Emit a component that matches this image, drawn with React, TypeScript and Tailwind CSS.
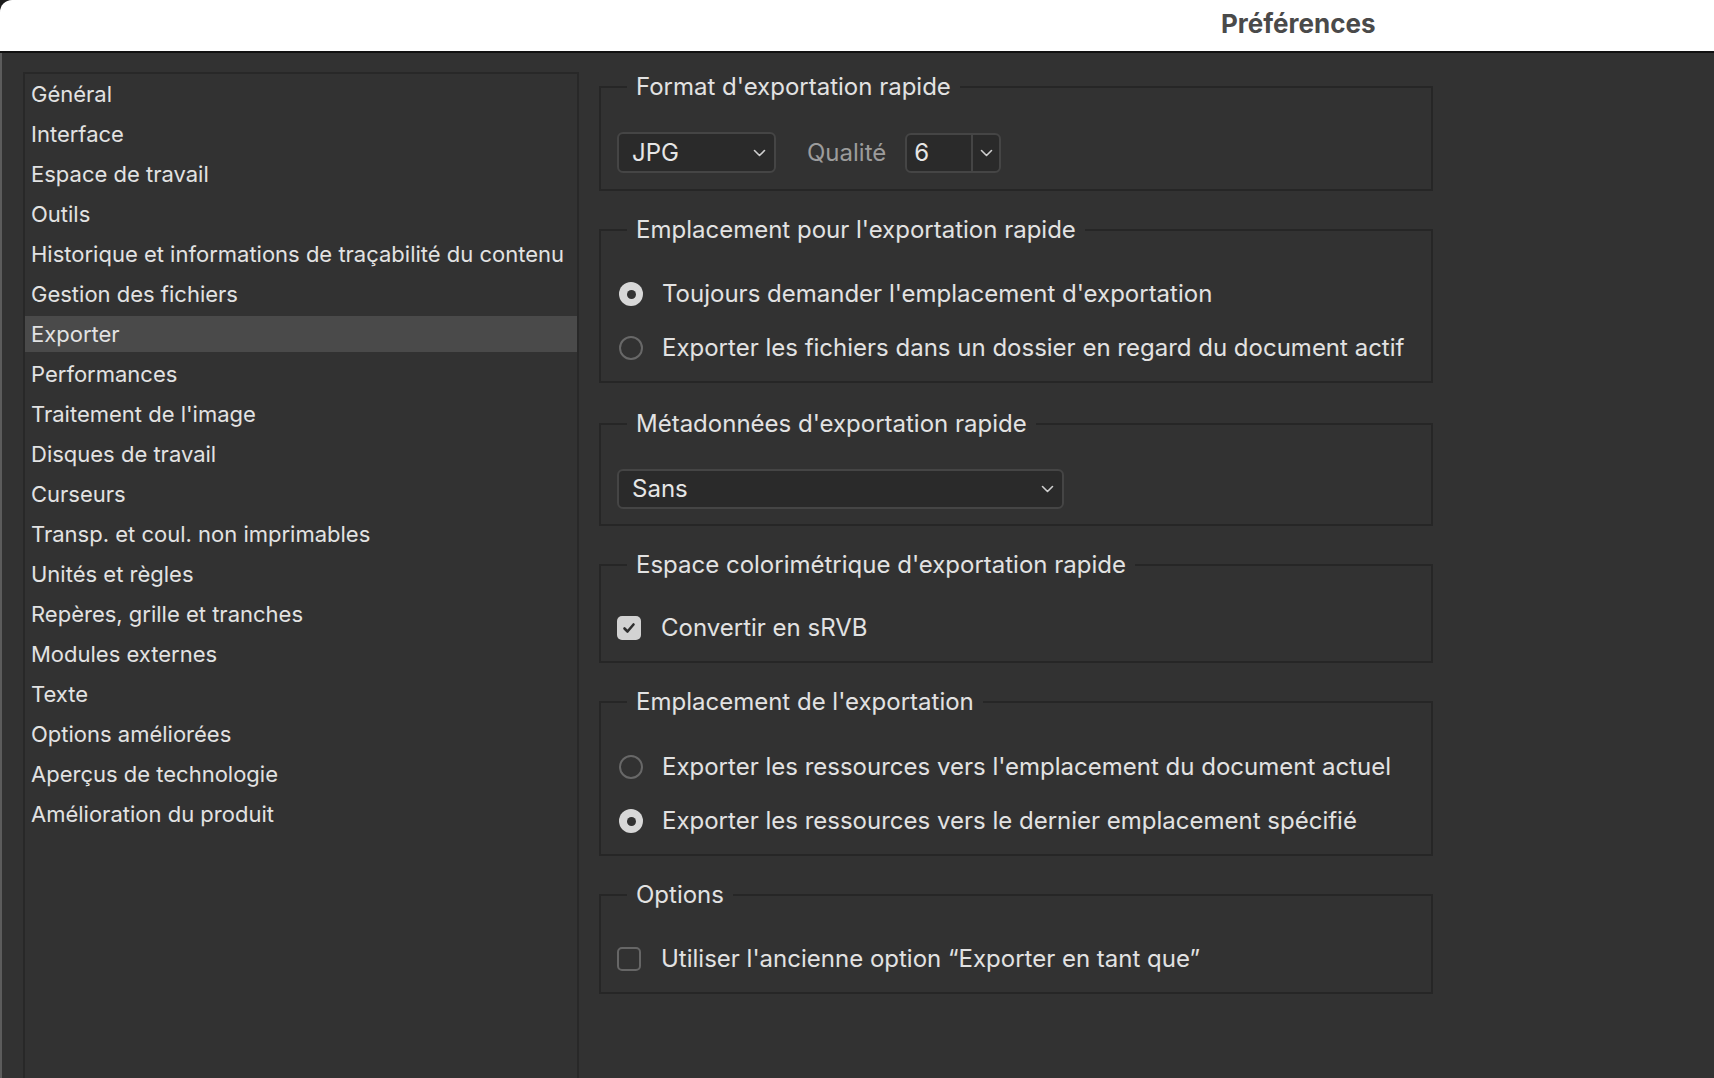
import React from "react"

const FONT = { fontFamily: "Inter, 'Noto Sans', sans-serif" }

const sections = [
  "Général",
  "Interface",
  "Espace de travail",
  "Outils",
  "Historique et informations de traçabilité du contenu",
  "Gestion des fichiers",
  "Exporter",
  "Performances",
  "Traitement de l'image",
  "Disques de travail",
  "Curseurs",
  "Transp. et coul. non imprimables",
  "Unités et règles",
  "Repères, grille et tranches",
  "Modules externes",
  "Texte",
  "Options améliorées",
  "Aperçus de technologie",
  "Amélioration du produit",
]

function Chevron() {
  return (
    <svg width="13" height="8" viewBox="0 0 13 8" fill="none">
      <polyline points="1.5,1.5 6.5,6.5 11.5,1.5" stroke="#cfcfcf" strokeWidth="1.6" strokeLinecap="round" strokeLinejoin="round" />
    </svg>
  )
}

function Radio({ checked, label }: { checked?: boolean; label: string }) {
  return (
    <div className="flex h-[36px] items-center">
      <span className="ml-[2px] w-[24px] h-[24px] shrink-0">
        {checked ? (
          <span className="flex h-full w-full items-center justify-center rounded-full bg-[#d8d8d8]">
            <span className="h-[9px] w-[9px] rounded-full bg-[#323232]" />
          </span>
        ) : (
          <span className="block h-full w-full rounded-full border-2 border-[#686868]" />
        )}
      </span>
      <span className="ml-[19px] text-[24px] text-[#e2e2e2]">{label}</span>
    </div>
  )
}

function Checkbox({ checked, label }: { checked?: boolean; label: string }) {
  return (
    <div className="flex h-[36px] items-center">
      {checked ? (
        <span className="flex h-[24px] w-[24px] items-center justify-center rounded-[5px] bg-[#d2d2d2]">
          <svg width="16" height="16" viewBox="0 0 16 16" fill="none">
            <polyline points="3.5,8.5 6.5,11.5 12.5,4.5" stroke="#2e2e2e" strokeWidth="2.6" strokeLinecap="round" strokeLinejoin="round" />
          </svg>
        </span>
      ) : (
        <span className="block h-[24px] w-[24px] rounded-[5px] border-2 border-[#666666]" />
      )}
      <span className="ml-[20px] text-[24px] text-[#e2e2e2]">{label}</span>
    </div>
  )
}

function Group({ title, top, children }: { title: string; top: string; children: React.ReactNode }) {
  return (
    <fieldset className={`w-[834px] border-2 border-[#262626] pl-[16px] pt-[30px] pb-[15px] ${top}`}>
      <legend className="ml-[10px] px-[9px] h-[30px] leading-[30px] text-[24px] text-[#e2e2e2]">{title}</legend>
      {children}
    </fieldset>
  )
}

export default function App() {
  return (
    <div className="w-[1714px] h-[1078px] overflow-hidden bg-[#1c1c1c] flex flex-col" style={FONT}>
      {/* barre de titre */}
      <div className="h-[53px] shrink-0 bg-white rounded-tl-[12px] border-b-2 border-[#111] flex items-center pl-[1221px] pb-[5px]">
        <span className="text-[26px] font-bold text-[#4a4a4a]">Préférences</span>
      </div>

      <div className="flex-1 flex bg-[#323232] border-l-2 border-[#5c5c5c] min-h-0">
        {/* liste des sections */}
        <aside className="ml-[21px] mt-[19px] w-[556px] shrink-0 border-2 border-b-0 border-[#282828] pt-[2px]">
          {sections.map((s, i) => (
            <div
              key={s}
              className={`h-[36px] px-[6px] flex items-center text-[22px] text-[#e2e2e2] whitespace-nowrap ${i > 0 ? "mt-[4px]" : ""} ${s === "Exporter" ? "bg-[#4a4a4a]" : ""}`}
            >
              {s}
            </div>
          ))}
        </aside>

        {/* réglages */}
        <main className="ml-[20px] flex flex-col">
          <Group title="Format d'exportation rapide" top="mt-[19px] pb-[16px]">
            <div className="flex items-center h-[41px]">
              <div className="w-[159px] h-[41px] rounded-[6px] border-2 border-[#454545] bg-[#2a2a2a] flex items-center justify-between pl-[13px] pr-[8px]">
                <span className="text-[24px] text-[#e6e6e6]">JPG</span>
                <Chevron />
              </div>
              <span className="ml-[31px] text-[24px] text-[#9c9c9c]">Qualité</span>
              <div className="ml-[19px] w-[96px] h-[40px] rounded-[6px] border-2 border-[#454545] bg-[#2a2a2a] flex">
                <div className="w-[64px] flex items-center pl-[7px] text-[24px] text-[#e6e6e6]">6</div>
                <div className="flex-1 border-l-2 border-[#454545] flex items-center justify-center">
                  <Chevron />
                </div>
              </div>
            </div>
          </Group>

          <Group title="Emplacement pour l'exportation rapide" top="mt-[24px]">
            <div className="flex flex-col gap-[18px] pt-[1px]">
              <Radio checked label="Toujours demander l'emplacement d'exportation" />
              <Radio label="Exporter les fichiers dans un dossier en regard du document actif" />
            </div>
          </Group>

          <Group title="Métadonnées d'exportation rapide" top="mt-[26px]">
            <div className="w-[447px] h-[40px] rounded-[6px] border-2 border-[#454545] bg-[#2a2a2a] flex items-center justify-between pl-[13px] pr-[8px]">
              <span className="text-[24px] text-[#e6e6e6]">Sans</span>
              <Chevron />
            </div>
          </Group>

          <Group title="Espace colorimétrique d'exportation rapide" top="mt-[24px]">
            <Checkbox checked label="Convertir en sRVB" />
          </Group>

          <Group title="Emplacement de l'exportation" top="mt-[24px]">
            <div className="flex flex-col gap-[18px] pt-[2px]">
              <Radio label="Exporter les ressources vers l'emplacement du document actuel" />
              <Radio checked label="Exporter les ressources vers le dernier emplacement spécifié" />
            </div>
          </Group>

          <Group title="Options" top="mt-[24px]">
            <div className="pt-[1px]">
              <Checkbox label="Utiliser l'ancienne option “Exporter en tant que”" />
            </div>
          </Group>
        </main>
      </div>
    </div>
  )
}
